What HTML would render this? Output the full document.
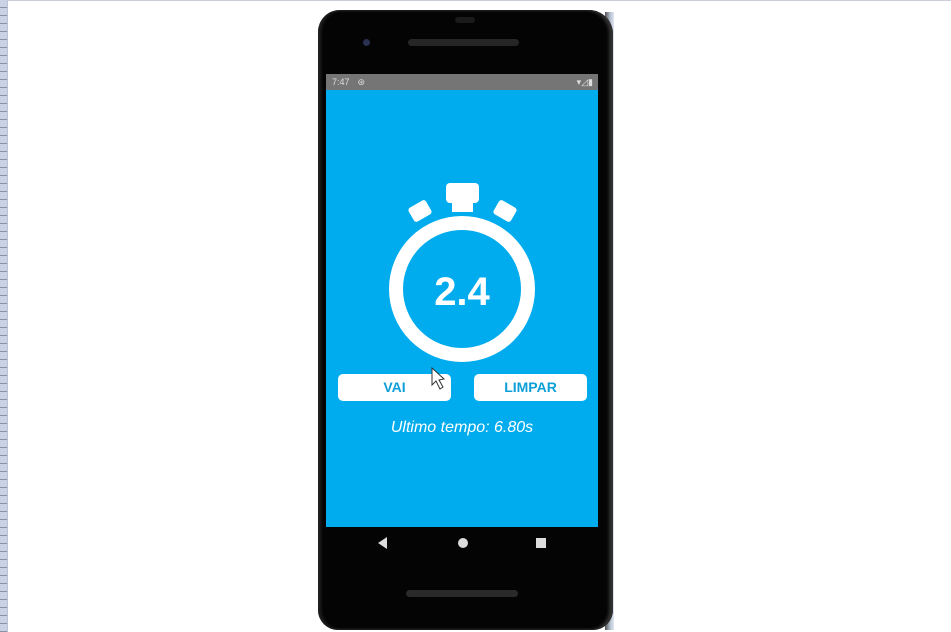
<!DOCTYPE html>
<html><head><style>
body{margin:0;width:951px;height:632px;background:#fff;position:relative;overflow:hidden;font-family:"Liberation Sans",sans-serif}
.lb{position:absolute;left:0;top:0;width:7px;height:632px;background:repeating-linear-gradient(#c9d3e4 0 7px,#8a93a6 7px 8px);border-right:1px solid #b8c3d6}
.top{position:absolute;left:7px;top:0;width:944px;height:1px;background:#c9ced8}
.phone{position:absolute;left:318px;top:10px;width:295px;height:620px;background:#040404;border-radius:22px 24px 20px 20px;box-shadow:inset -4px 0 3px #333,inset 3px 0 3px #222}
.edge{position:absolute;left:605px;top:12px;width:9px;height:618px;background:linear-gradient(90deg,#555,#b8c4d4 60%,#dfe6f0)}
.screen{position:absolute;left:326px;top:90px;width:272px;height:437px;background:#00acee}
.status{position:absolute;left:326px;top:74px;width:272px;height:16px;background:#757575;color:#ddd;font-size:9px;line-height:16px}
.btn{position:absolute;top:374px;height:27px;width:113px;background:#fff;border-radius:5px;color:#0d9fd8;font-weight:bold;font-size:14px;text-align:center;line-height:27px}
</style></head><body>
<div class="lb"></div><div class="top"></div>
<div class="edge"></div>
<div class="phone"></div>
<div style="position:absolute;left:455px;top:17px;width:20px;height:6px;border-radius:3px;background:#1a1a1a"></div>
<div style="position:absolute;left:363px;top:39px;width:7px;height:7px;border-radius:50%;background:#2a3050"></div>
<div style="position:absolute;left:408px;top:39px;width:111px;height:7px;border-radius:4px;background:#262626"></div>
<div class="status"><span style="margin-left:6px">7:47</span><span style="margin-left:8px">⊛</span><span style="position:absolute;right:5px">▾◿▮</span></div>
<div class="screen"></div>
<svg style="position:absolute;left:0;top:0" width="951" height="632">
<circle cx="462" cy="289" r="66" fill="none" stroke="#fff" stroke-width="14"/>
<rect x="446" y="183" width="33" height="20" rx="4" fill="#fff"/>
<rect x="452" y="200" width="21" height="12" fill="#fff"/>
<rect x="410" y="203" width="20" height="16" rx="3" fill="#fff" transform="rotate(-30 420 211)"/>
<rect x="495" y="203" width="20" height="16" rx="3" fill="#fff" transform="rotate(30 505 211)"/>
<text x="462" y="305" text-anchor="middle" font-family="Liberation Sans" font-weight="bold" font-size="40" fill="#fff">2.4</text>
<polygon points="378,543 387,537 387,549" fill="#ddd"/>
<circle cx="463" cy="543" r="5" fill="#ddd"/>
<rect x="536" y="538" width="10" height="10" fill="#ddd"/>
<rect x="406" y="590" width="112" height="7" rx="3.5" fill="#2a2a2a"/>
</svg>
<div class="btn" style="left:338px">VAI</div>
<div class="btn" style="left:474px">LIMPAR</div>
<svg style="position:absolute;left:0;top:0" width="951" height="632">
<polygon points="432,368 432,385 436,381 440,389 443,387 439,380 444,379" fill="#fff" stroke="#333" stroke-width="1"/>
</svg>
<div style="position:absolute;left:326px;width:272px;top:419px;text-align:center;color:#fff;font-style:italic;font-size:16px">Ultimo tempo: 6.80s</div>
</body></html>
